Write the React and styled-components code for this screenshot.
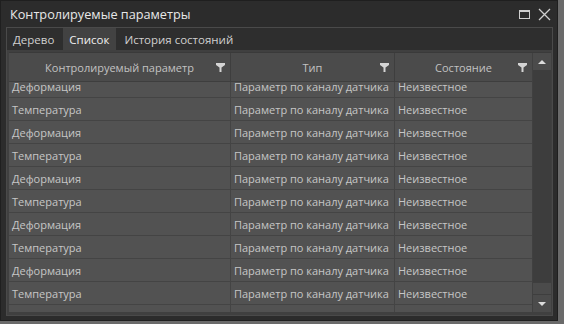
import styled, { createGlobalStyle } from 'styled-components';

const GlobalStyle = createGlobalStyle`
  html, body {
    margin: 0;
    padding: 0;
    background: #6a6a6a;
  }
  body {
    font-family: "Open Sans", "Noto Sans", sans-serif;
  }
`;

const rows = [
  'Деформация',
  'Температура',
  'Деформация',
  'Температура',
  'Деформация',
  'Температура',
  'Деформация',
  'Температура',
  'Деформация',
  'Температура',
  'Деформация',
];

const FilterIcon = () => (
  <FilterMark width="9" height="9" viewBox="0 0 9 9">
    <path d="M0 0H9V2L5.5 4.5V9H3.5V4.5L0 2Z" fill="#d4d4d4" />
  </FilterMark>
);

const App = () => {
  return (
    <>
      <GlobalStyle />
      <Window>
        <TitleBar>
          <Title>Контролируемые параметры</Title>
          <WindowButtons>
            <MaxIcon />
            <svg width="13" height="13" viewBox="0 0 13 13">
              <path d="M1 1L12 12M12 1L1 12" stroke="#cfcfcf" strokeWidth="1.3" />
            </svg>
          </WindowButtons>
        </TitleBar>

        <Panel>
          <Tabs>
            <Tab>Дерево</Tab>
            <Tab $active>Список</Tab>
            <Tab>История состояний</Tab>
          </Tabs>

          <GridArea>
            <Grid>
              <GridMain>
                <HeaderRow>
                  <HeaderCell $w={222}>
                    Контролируемый параметр
                    <FilterIcon />
                  </HeaderCell>
                  <HeaderCell $w={164}>
                    Тип
                    <FilterIcon />
                  </HeaderCell>
                  <HeaderCell $w={137} $last>
                    Состояние
                    <FilterIcon />
                  </HeaderCell>
                </HeaderRow>
                <Body>
                  <Rows>
                    {rows.map((name, i) => (
                      <Row key={i}>
                        <Cell $w={222}>{name}</Cell>
                        <Cell $w={164}>Параметр по каналу датчика</Cell>
                        <Cell $w={137} $last>Неизвестное</Cell>
                      </Row>
                    ))}
                  </Rows>
                </Body>
              </GridMain>

              <ScrollBar>
                <ScrollButton>
                  <Arrow />
                </ScrollButton>
                <Thumb />
                <TrackGap />
                <ScrollButton>
                  <Arrow $down />
                </ScrollButton>
              </ScrollBar>
            </Grid>
          </GridArea>
        </Panel>
      </Window>
    </>
  );
};

const Window = styled.div`
  width: 556px;
  height: 319px;
  background: #2c2c2c;
  border: 1px solid #1f1f1f;
  display: flex;
  flex-direction: column;
`;

const TitleBar = styled.div`
  height: 26px;
  display: flex;
  align-items: center;
  justify-content: space-between;
  padding: 0 6px 0 9px;
`;

const Title = styled.div`
  font-size: 12.7px;
  color: #e8e8e8;
`;

const WindowButtons = styled.div`
  display: flex;
  align-items: center;
  gap: 8px;
`;

const MaxIcon = styled.div`
  width: 9px;
  height: 6px;
  border: 1px solid #cfcfcf;
  border-top-width: 2px;
`;

const Panel = styled.div`
  flex: 1;
  margin: 0 4px 4px 5px;
  border: 1px solid #4a4a4a;
  display: flex;
  flex-direction: column;
  min-height: 0;
`;

const Tabs = styled.div`
  height: 22px;
  display: flex;
  align-items: stretch;
  background: #2e2e2e;
`;

const Tab = styled.div`
  display: flex;
  align-items: center;
  padding: 0 7px 0 6px;
  margin-right: 2px;
  font-size: 11.5px;
  color: ${(p) => (p.$active ? '#f0f0f0' : '#d0d0d0')};
  background: ${(p) => (p.$active ? '#424242' : 'transparent')};
`;

const GridArea = styled.div`
  flex: 1;
  background: #404040;
  padding: 2px 1px 3px 2px;
  min-height: 0;
  display: flex;
`;

const Grid = styled.div`
  flex: 1;
  display: flex;
  border-top: 1px solid #3a3a3a;
  min-height: 0;
`;

const GridMain = styled.div`
  width: 523px;
  display: flex;
  flex-direction: column;
  min-height: 0;
`;

const HeaderRow = styled.div`
  height: 28px;
  display: flex;
  background: #4b4b4b;
  border-bottom: 1px solid #3e3e3e;
  position: relative;
  z-index: 1;
`;

const HeaderCell = styled.div`
  position: relative;
  width: ${(p) => p.$w}px;
  box-sizing: border-box;
  display: flex;
  align-items: center;
  justify-content: center;
  border-right: ${(p) => (p.$last ? 'none' : '1px solid #3e3e3e')};
  font-size: 11px;
  color: #c2c2c2;
`;

const FilterMark = styled.svg`
  position: absolute;
  right: 5px;
  top: 10px;
`;

const Body = styled.div`
  flex: 1;
  overflow: hidden;
  background: #4e4e4e;
`;

const Rows = styled.div`
  margin-top: -7px;
`;

const Row = styled.div`
  height: 22px;
  display: flex;
  background: #525252;
  border-bottom: 1px solid #444444;
`;

const Cell = styled.div`
  width: ${(p) => p.$w}px;
  box-sizing: border-box;
  display: flex;
  align-items: center;
  padding-left: 3px;
  border-right: ${(p) => (p.$last ? 'none' : '1px solid #444444')};
  font-size: 11px;
  color: #c6c6c6;
  white-space: nowrap;
  overflow: hidden;
`;

const ScrollBar = styled.div`
  width: 18px;
  margin-left: 1px;
  display: flex;
  flex-direction: column;
  background: #474747;
`;

const ScrollButton = styled.div`
  height: 17px;
  display: flex;
  align-items: center;
  justify-content: center;
  background: #4b4b4b;
`;

const Arrow = styled.div`
  width: 0;
  height: 0;
  border-left: 4px solid transparent;
  border-right: 4px solid transparent;
  ${(p) =>
    p.$down
      ? 'border-top: 4px solid #dcdcdc;'
      : 'border-bottom: 4px solid #dcdcdc;'}
`;

const Thumb = styled.div`
  flex: 1;
  background: #3d3d3d;
`;

const TrackGap = styled.div`
  height: 11px;
  background: #4b4b4b;
  border-top: 1px solid #3e3e3e;
  border-bottom: 1px solid #3e3e3e;
`;

export default App;
